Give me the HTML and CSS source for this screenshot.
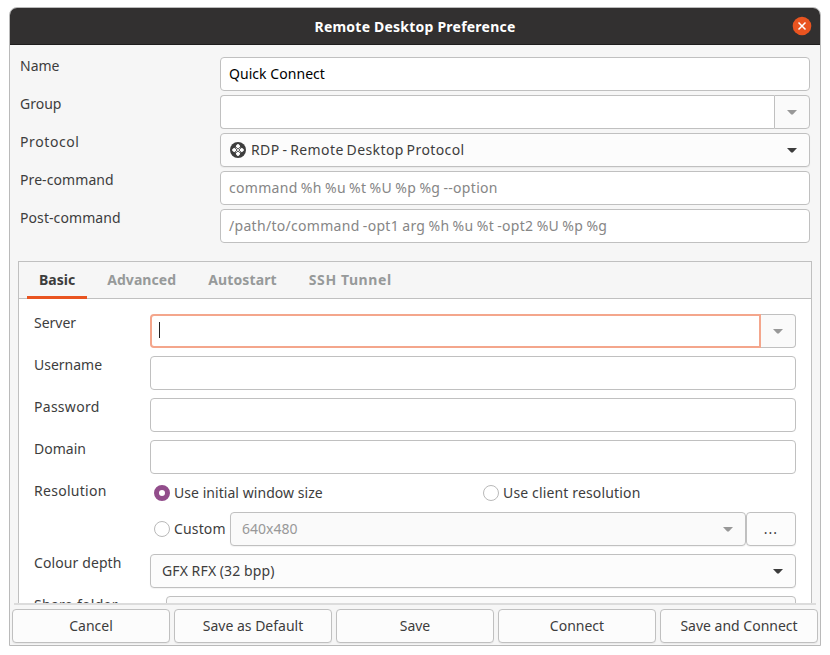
FILE: index.html
```html
<!DOCTYPE html>
<html lang="en">
<head>
<meta charset="utf-8">
<title>Remote Desktop Preference</title>
<link rel="stylesheet" href="styles.css">
</head>
<body>
<div class="window">
  <header class="titlebar">
    <span class="title">Remote Desktop Preference</span>
    <svg class="close" width="20" height="20" viewBox="0 0 20 20"><circle cx="10" cy="10" r="9.3" fill="#e95420"/><path d="M6.5 6.5l7 7M13.5 6.5l-7 7" stroke="#fff" stroke-width="1.5"/></svg>
  </header>
  <section class="profile">
    <label class="label">Name</label>
    <div class="entry value">Quick Connect</div>
    <label class="label">Group</label>
    <div class="combo">
      <div class="entry"></div>
      <div class="drop"><svg class="arrow dim" width="10" height="5" viewBox="0 0 10 5"><path d="M0 0h10L5.8 4.6H4.2z"/></svg></div>
    </div>
    <label class="label protocol-label">Protocol</label>
    <div class="select protocol">
      <svg class="rdp" width="16" height="16" viewBox="0 0 16 16"><circle cx="8" cy="8" r="8" fill="#3d3d3d"/><g fill="#fff"><rect x="6.2" y="2.4" width="3.6" height="3.6" rx="1" transform="rotate(45 8 4.2)"/><rect x="6.2" y="10" width="3.6" height="3.6" rx="1" transform="rotate(45 8 11.8)"/><rect x="2.4" y="6.2" width="3.6" height="3.6" rx="1" transform="rotate(45 4.2 8)"/><rect x="10" y="6.2" width="3.6" height="3.6" rx="1" transform="rotate(45 11.8 8)"/></g><path d="M5.7 5.7l4.6 4.6M10.3 5.7l-4.6 4.6" stroke="#fff" stroke-width=".8"/></svg>
      <span class="select-text">RDP - Remote Desktop Protocol</span>
      <svg class="arrow" width="10" height="5" viewBox="0 0 10 5"><path d="M0 0h10L5.8 4.6H4.2z"/></svg>
    </div>
    <label class="label command-label">Pre-command</label>
    <div class="entry hint">command %h %u %t %U %p %g --option</div>
    <label class="label command-label">Post-command</label>
    <div class="entry hint">/path/to/command -opt1 arg %h %u %t -opt2 %U %p %g</div>
  </section>
  <section class="notebook">
    <nav class="tabs">
      <span class="tab active">Basic</span>
      <span class="tab advanced">Advanced</span>
      <span class="tab autostart">Autostart</span>
      <span class="tab tunnel">SSH Tunnel</span>
    </nav>
    <div class="page">
      <label class="label">Server</label>
      <div class="combo">
        <div class="entry focused"><span class="caret"></span></div>
        <div class="drop"><svg class="arrow dim" width="10" height="5" viewBox="0 0 10 5"><path d="M0 0h10L5.8 4.6H4.2z"/></svg></div>
      </div>
      <label class="label">Username</label>
      <div class="entry"></div>
      <label class="label wide">Password</label>
      <div class="entry"></div>
      <label class="label">Domain</label>
      <div class="entry"></div>
      <label class="label wide">Resolution</label>
      <div class="radios">
        <div class="choice initial"><span class="radio checked"></span>Use initial window size</div>
        <div class="choice client"><span class="radio"></span>Use client resolution</div>
      </div>
      <div class="custom">
        <div class="choice client"><span class="radio"></span>Custom</div>
        <div class="select disabled"><span class="select-text">640x480</span><svg class="arrow dim" width="10" height="5" viewBox="0 0 10 5"><path d="M0 0h10L5.8 4.6H4.2z"/></svg></div>
        <div class="button more">...</div>
      </div>
      <label class="label depth-label">Colour depth</label>
      <div class="select depth"><span class="select-text">GFX RFX (32 bpp)</span><svg class="arrow" width="10" height="5" viewBox="0 0 10 5"><path d="M0 0h10L5.8 4.6H4.2z"/></svg></div>
      <label class="label wide">Share folder</label>
      <div class="select share"></div>
    </div>
  </section>
  <div class="separator"></div>
  <footer class="actions">
    <div class="button">Cancel</div>
    <div class="button">Save as Default</div>
    <div class="button">Save</div>
    <div class="button">Connect</div>
    <div class="button">Save and Connect</div>
  </footer>
</div>
</body>
</html>
```
FILE: styles.css
```css
* { box-sizing: border-box; }
body {
  margin: 0;
  padding: 7px 9px;
  background: #fff;
  color: #3d3d3d;
  font: 14px/18px "Noto Sans", "Open Sans", sans-serif;
  white-space: nowrap;
}
.window {
  display: flex;
  flex-direction: column;
  width: 812px;
  height: 639px;
  border: 1px solid #bababa;
  border-radius: 8px 8px 0 0;
  background: #f6f6f6;
  overflow: hidden;
}
.titlebar {
  display: grid;
  grid-template-columns: 40px 1fr 40px;
  align-items: center;
  flex: none;
  height: 37px;
  background: #323030;
  border-bottom: 1px solid #1e1d1d;
}
.title {
  grid-column: 2;
  padding-top: 2px;
  color: #fff;
  font-weight: 700;
  letter-spacing: .22px;
  text-align: center;
}
.close { justify-self: end; margin-right: 8px; margin-top: -1px; }
.profile {
  display: grid;
  grid-template-columns: 200px 590px;
  row-gap: 4px;
  padding: 12px 10px 18px;
  flex: none;
}
.label { height: 18px; }
.protocol-label { letter-spacing: .6px; }
.command-label { letter-spacing: .08px; }
.depth-label { letter-spacing: .1px; }
.wide { letter-spacing: .28px; }
.entry {
  display: flex;
  align-items: center;
  height: 34px;
  padding: 0 8px;
  border: 1px solid #c0c0c0;
  border-radius: 4px;
  background: #fff;
}
.value { color: #000; letter-spacing: .05px; }
.hint { color: #868686; letter-spacing: .3px; word-spacing: -.7px; }
.combo { display: flex; }
.combo .entry { flex: 1; border-right: 0; border-radius: 4px 0 0 4px; }
.combo .focused { border: 2px solid #f4a68c; padding-left: 7px; }
.caret { width: 1px; height: 16px; margin-top: -2px; background: #222; }
.drop {
  display: grid;
  place-items: center;
  width: 36px;
  height: 34px;
  border: 1px solid #c0c0c0;
  border-radius: 0 4px 4px 0;
  background: #fafafa;
}
.focused + .drop { width: 35px; border-left: 0; }
.arrow { flex: none; fill: #3d3d3d; }
.arrow.dim { fill: #989898; }
.select {
  display: flex;
  align-items: center;
  height: 34px;
  padding: 0 12px 0 11px;
  border: 1px solid #c0c0c0;
  border-radius: 4px;
  background: #fcfcfc;
  box-shadow: 0 1px 1px rgba(0, 0, 0, .05);
}
.select-text { flex: 1; }
.protocol { padding-left: 9px; gap: 5px; letter-spacing: .4px; word-spacing: -1.2px; }
.depth { letter-spacing: .15px; word-spacing: -.3px; }
.notebook {
  display: flex;
  flex-direction: column;
  flex: none;
  width: 794px;
  height: 342px;
  margin-left: 8px;
  border: 1px solid #c0c0c0;
  border-bottom: 0;
  overflow: hidden;
}
.tabs {
  display: flex;
  flex: none;
  gap: 8px;
  height: 37px;
  padding-left: 8px;
  border-bottom: 1px solid #c0c0c0;
}
.tab {
  height: 37px;
  padding: 9px 12px 0;
  color: #979a9a;
  font-weight: 700;
}
.active { color: #3d3d3d; border-bottom: 3px solid #e95420; }
.advanced { letter-spacing: .07px; }
.autostart { letter-spacing: .13px; }
.tunnel { letter-spacing: .6px; }
.page {
  display: grid;
  grid-template-columns: 116px 646px;
  gap: 8px 0;
  align-content: start;
  flex: 1;
  padding: 15px 15px 0;
  background: #fff;
}
.radios { display: grid; grid-template-columns: 329px 1fr; height: 22px; }
.choice { display: flex; align-items: center; gap: 4px; padding-left: 4px; }
.initial { letter-spacing: .05px; }
.client { letter-spacing: .15px; }
.radio {
  width: 16px;
  height: 16px;
  border: 1px solid #b9b9b9;
  border-radius: 50%;
  background: #fff;
}
.checked { border: 5px solid #924d8b; }
.custom { grid-column: 2; display: flex; }
.custom .choice { width: 80px; flex: none; }
.custom .select { flex: 1; }
.disabled { color: #989898; background: #fafafa; }
.share { margin-left: 16px; background: #fafafa; }
.separator { flex: none; height: 2px; margin: 0 4px; background: #dcdcdc; }
.actions {
  display: grid;
  grid-template-columns: repeat(5, 158px);
  gap: 4px;
  padding: 4px 2px 0;
}
.button {
  display: flex;
  align-items: center;
  justify-content: center;
  height: 34px;
  border: 1px solid #c0c0c0;
  border-radius: 4px;
  background: #fcfcfc;
  box-shadow: 0 1px 1px rgba(0, 0, 0, .05);
}
.more { width: 50px; letter-spacing: 1px; }
```
